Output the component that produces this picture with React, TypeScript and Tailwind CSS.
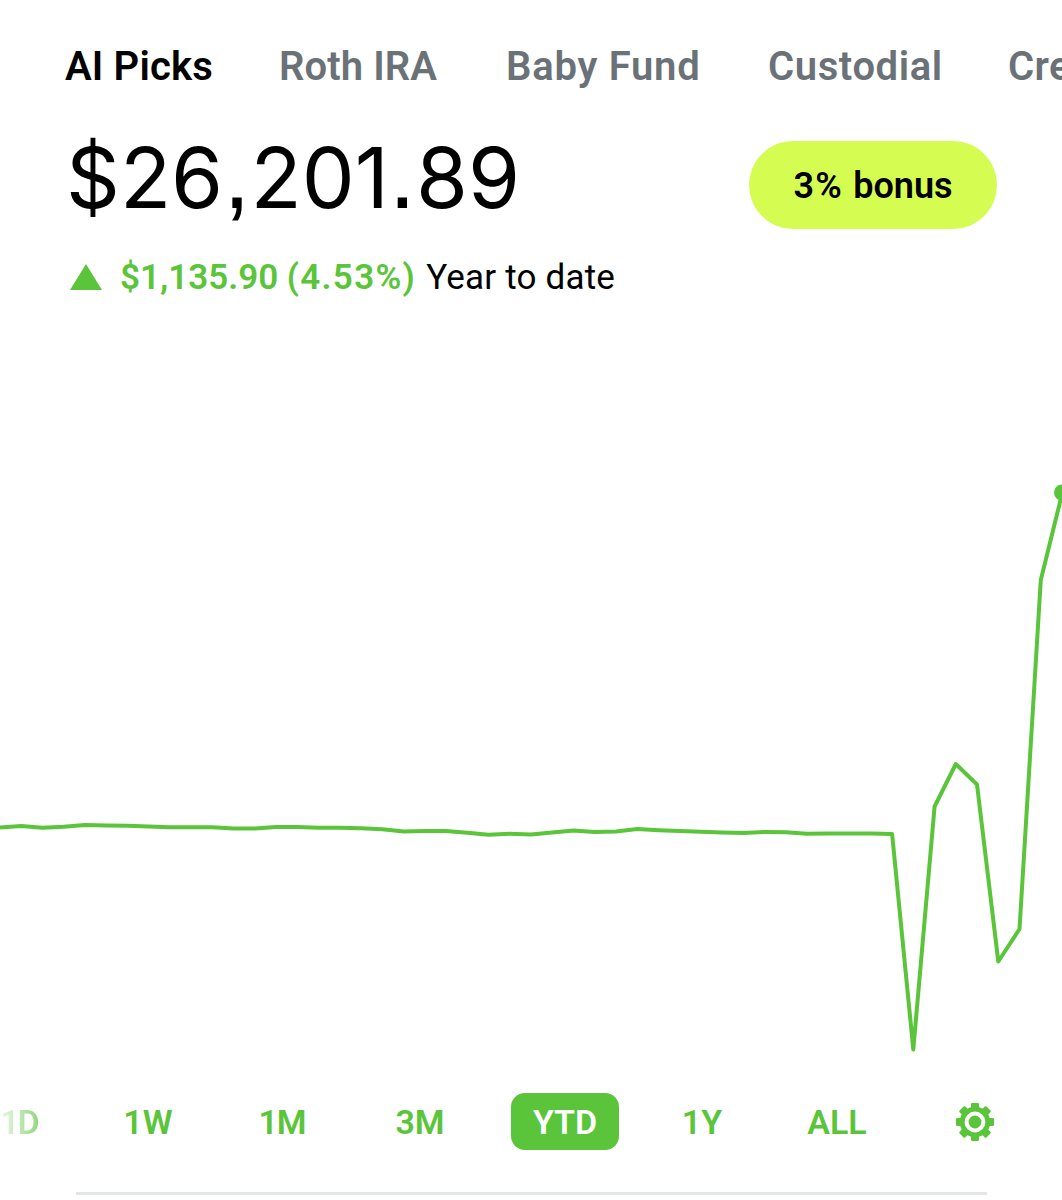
import clsx from 'clsx'

const accounts = [
  { name: 'AI Picks', style: 'w-[146px] tracking-[0.15px]', active: true },
  { name: 'Roth IRA', style: 'w-[159px] tracking-[0.1px]' },
  { name: 'Baby Fund', style: 'w-[194px] tracking-[0.75px]' },
  { name: 'Custodial', style: 'w-[172px] tracking-[0.6px]' },
  { name: 'Credit Card', style: 'w-[220px] tracking-[0.4px]' },
]

const ranges = [
  { label: '1D', box: 'w-[40px]' },
  { label: '1W', box: 'w-[108px] ml-[54px]' },
  { label: '1M', box: 'w-[108px] ml-[26px] tracking-[-1px]' },
  { label: '3M', box: 'w-[108px] ml-[30px]' },
  { label: 'YTD', box: 'w-[108px] ml-[37px]', active: true },
  { label: '1Y', box: 'w-[108px] ml-[29px]' },
  { label: 'ALL', box: 'w-[108px] ml-[27px]' },
]

// Portfolio value samples, evenly spaced across the chart
const samples = [
  827.5, 826, 827.7, 826.7, 825, 825.5, 825.8, 826.5, 827.2, 827.3, 827.3,
  828.5, 828.5, 827.1, 827.1, 827.8, 827.7, 828.2, 829.2, 831.5, 831, 831,
  832.7, 834.7, 833.7, 834.4, 832.5, 830.5, 832, 831.5, 829, 830.2, 831, 831.8,
  832.5, 833, 832, 832.2, 833.7, 833.5, 833.5, 833.6, 834, 1049.5, 806.5, 764,
  784.5, 961.5, 929, 580, 494,
]

const points = samples.map((y, i) => `${(i * 21.24).toFixed(1)},${y - 300}`).join(' ')

function Gear() {
  return (
    <svg viewBox="-20 -20 40 40" className="w-10 h-10" fill="#5ac53a">
      {[0, 45, 90, 135].map((angle) => (
        <rect key={angle} x="-4" y="-19" width="8" height="38" rx="1.2" transform={`rotate(${angle})`} />
      ))}
      <circle r="15.3" />
      <circle r="8.4" fill="none" stroke="white" strokeWidth="4" />
    </svg>
  )
}

// Comma and decimal point are set wider and squarer than the digits
function Mark({ children }: { children: string }) {
  return <span className="font-['Liberation_Sans',sans-serif] text-[98px] leading-none">{children}</span>
}

export default function App() {
  return (
    <div className="w-[1062px] h-[1200px] overflow-hidden bg-white text-black font-[Roboto,sans-serif] flex flex-col">
      {/* Account tabs */}
      <nav className="h-[134px] shrink-0 flex items-start gap-[68px] pl-[65px] pt-[43px]">
        {accounts.map((account) => (
          <button
            key={account.name}
            className={clsx(
              'shrink-0 text-left whitespace-nowrap text-[40px] leading-[48px] font-semibold',
              account.style,
              account.active ? 'text-black' : 'text-[#6a7278]',
            )}
          >
            {account.name}
          </button>
        ))}
      </nav>

      {/* Balance */}
      <header className="h-[166px] shrink-0 pl-[66px] pr-[65px]">
        <div className="flex items-start justify-between h-[95px]">
          <h1 className="flex items-baseline -mt-[9px] font-[Inter,sans-serif] text-[84px] leading-[88px]">
            <span>$26</span>
            <Mark>,</Mark>
            <span>201</span>
            <Mark>.</Mark>
            <span>89</span>
          </h1>
          <button className="mt-[7px] pt-[2px] w-[248px] h-[88px] rounded-full bg-[#d5fd51] text-[36px] font-semibold">
            <span className="tracking-[1.2px]">3% </span>
            <span>bonus</span>
          </button>
        </div>
        <p className="flex items-center whitespace-nowrap text-[35px] leading-[48px] mt-[23px]">
          <svg viewBox="0 0 32 26" className="w-8 h-[26px] ml-[4px]" fill="#5ac53a">
            <path d="M16 0 32 26H0Z" />
          </svg>
          <span className="ml-[18px] mt-[2px] font-semibold text-[#5ac53a]">
            $1,135.90 <span className="tracking-[1.3px]">(4.53%)</span>
          </span>
          <span className="ml-[10px] mt-[2px] font-[370] tracking-[0.2px]">Year to date</span>
        </p>
      </header>

      {/* Chart */}
      <svg viewBox="0 0 1062 780" className="w-full h-[780px] shrink-0">
        <polyline points={points} fill="none" stroke="#5ac53a" strokeWidth="4" strokeLinejoin="round" />
        <circle cx="1062" cy="192.5" r="8" fill="#5ac53a" />
      </svg>

      {/* Time ranges */}
      <div className="h-[83px] shrink-0 flex items-center">
        {ranges.map((range) => (
          <button
            key={range.label}
            className={clsx(
              'shrink-0 h-[57px] pt-[2px] rounded-[14px] text-[34px] font-semibold',
              range.box,
              range.active ? 'bg-[#5ac53a] text-white' : 'text-[#5ac53a]',
              range.label === '1D' &&
                'text-left tracking-[-2px] bg-linear-to-r from-[#eaf7e6] to-[#5ac53a] to-150% bg-clip-text text-transparent',
            )}
          >
            {range.label}
          </button>
        ))}
        <button className="ml-[64px]">
          <Gear />
        </button>
      </div>
      <hr className="mx-[76px] mt-[29px] w-[911px] border-t-3 border-[#e3e6e8]" />
    </div>
  )
}
